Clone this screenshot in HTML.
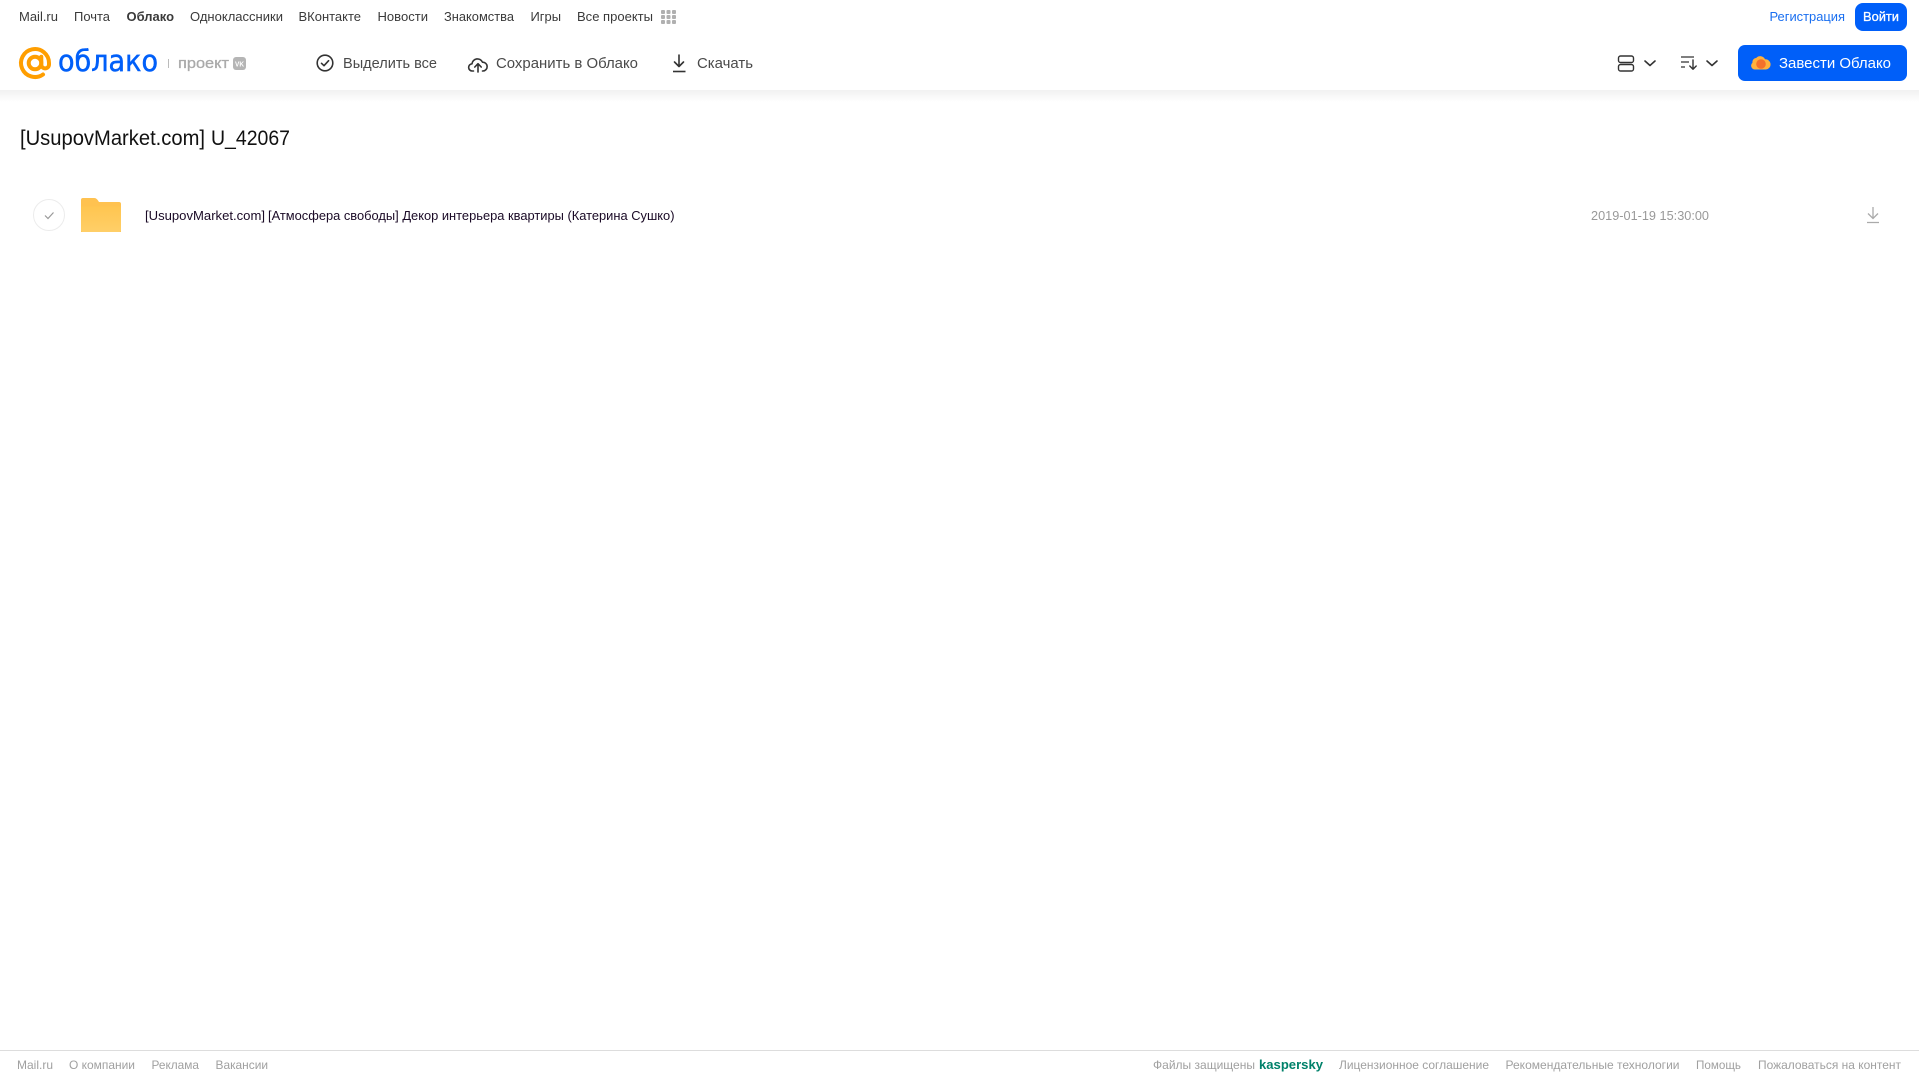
<!DOCTYPE html>
<html lang="ru">
<head>
<meta charset="utf-8">
<title>Облако</title>
<style>
html,body{margin:0;padding:0;background:#fff;width:1919px;height:1079px;overflow:hidden}
svg{display:block;position:absolute;left:0;top:0}
text{font-family:"Liberation Sans","DejaVu Sans",sans-serif;white-space:pre}
.n{font-size:13px;fill:#3a3a3a}
.t{font-size:15px;fill:#4a4a4a}
.f{font-size:12px;fill:#a0a0a0}
</style>
</head>
<body>
<svg width="1919" height="1079" viewBox="0 0 1919 1079" xmlns="http://www.w3.org/2000/svg">
<defs>
<linearGradient id="sh" x1="0" y1="0" x2="0" y2="1"><stop offset="0" stop-color="#f1f1f1"/><stop offset="1" stop-color="#fff"/></linearGradient>
<linearGradient id="fo" x1="0" y1="0" x2="0" y2="1"><stop offset="0" stop-color="#ffc550"/><stop offset="1" stop-color="#ffcf68"/></linearGradient>
</defs>
<rect x="0" y="90" width="1919" height="12" fill="url(#sh)"/>

<!-- top nav -->
<text class="n" x="19" y="21" textLength="39" lengthAdjust="spacingAndGlyphs">Mail.ru</text>
<text class="n" x="74" y="21" textLength="36" lengthAdjust="spacingAndGlyphs">Почта</text>
<text class="n" x="126.500" y="21" textLength="47.500" lengthAdjust="spacingAndGlyphs" font-weight="700">Облако</text>
<text class="n" x="190" y="21" textLength="93" lengthAdjust="spacingAndGlyphs">Одноклассники</text>
<text class="n" x="298.500" y="21" textLength="62.500" lengthAdjust="spacingAndGlyphs">ВКонтакте</text>
<text class="n" x="377.500" y="21" textLength="50.500" lengthAdjust="spacingAndGlyphs">Новости</text>
<text class="n" x="444" y="21" textLength="70" lengthAdjust="spacingAndGlyphs">Знакомства</text>
<text class="n" x="530.500" y="21" textLength="30.500" lengthAdjust="spacingAndGlyphs">Игры</text>
<text class="n" x="577" y="21" textLength="76" lengthAdjust="spacingAndGlyphs">Все проекты</text>
<g fill="#b0b0b0">
<rect x="661" y="10" width="4" height="4" rx="1"/><rect x="666.500" y="10" width="4" height="4" rx="1"/><rect x="672" y="10" width="4" height="4" rx="1"/>
<rect x="661" y="15" width="4" height="4" rx="1"/><rect x="666.500" y="15" width="4" height="4" rx="1"/><rect x="672" y="15" width="4" height="4" rx="1"/>
<rect x="661" y="20" width="4" height="4" rx="1"/><rect x="666.500" y="20" width="4" height="4" rx="1"/><rect x="672" y="20" width="4" height="4" rx="1"/>
</g>

<text x="1769.500" y="21" font-size="13" fill="#1a6ff0" textLength="75.500" lengthAdjust="spacingAndGlyphs">Регистрация</text>
<rect x="1855" y="3" width="52" height="28" rx="8" fill="#005ff9"/>
<text x="1863" y="21" font-size="13" fill="#fff" stroke="#fff" stroke-width=".3" textLength="36" lengthAdjust="spacingAndGlyphs">Войти</text>

<!-- logo -->
<g fill="none" stroke="#ff9e00" stroke-width="4" stroke-linecap="round">
<circle cx="35" cy="63" r="6.300"/>
<path d="M41.300 56.700v7.800a3.800 3.800 0 0 0 7.700 0V63a14 14 0 1 0-6 11.500"/>
</g>
<text x="58" y="71" font-size="29" fill="#005ff9" stroke="#005ff9" stroke-width=".5" textLength="100" lengthAdjust="spacingAndGlyphs" style="font-family:'DejaVu Sans',sans-serif">облако</text>
<rect x="168" y="59" width="1" height="9" fill="#bbb"/>
<text x="178" y="68" font-size="15" fill="#aaa" stroke="#aaa" stroke-width=".3" textLength="51" lengthAdjust="spacingAndGlyphs">проект</text>
<rect x="233" y="57" width="13" height="13" rx="3" fill="#b5b5b5"/>
<text x="235" y="66.500" font-size="7" font-weight="700" fill="#fff" textLength="9" lengthAdjust="spacingAndGlyphs">VK</text>

<!-- toolbar -->
<g fill="none" stroke="#333" stroke-width="1.600" stroke-linecap="round" stroke-linejoin="round">
<circle cx="325" cy="63" r="7.800"/>
<path d="M321.500 63.300l2.500 2.400 4.600-5"/>
<path d="M473.500 71h-1a3.600 3.600 0 0 1-.5-7.200 5.500 5.500 0 0 1 10.500-1.600A4.400 4.400 0 0 1 483 71h-.5"/>
<path d="M478 72v-8M474.800 67l3.200-3.300 3.200 3.300"/>
<path d="M679 55v11.500M674.500 62l4.500 4.500 4.500-4.500"/>
<path d="M673 71.500h12.500" stroke-linecap="butt"/>
<rect x="1618.500" y="56" width="15" height="6.500" rx="2" stroke-width="1.400"/>
<rect x="1618.500" y="64.500" width="15" height="6.500" rx="2" stroke-width="1.400"/>
<path d="M1645 61l5 4.500 5-4.500"/>
<path d="M1707 61l5 4.500 5-4.500"/>
<path d="M1681 57h13M1681 62h8M1681 67h4" stroke-width="1.300" stroke-linecap="butt"/>
<path d="M1693 60v9M1689.800 66l3.200 3.200 3.200-3.200" stroke-width="1.400"/>
</g>
<text class="t" x="343" y="68" textLength="94" lengthAdjust="spacingAndGlyphs">Выделить все</text>
<text class="t" x="496" y="68" textLength="142" lengthAdjust="spacingAndGlyphs">Сохранить в Облако</text>
<text class="t" x="697" y="68" textLength="56" lengthAdjust="spacingAndGlyphs">Скачать</text>

<!-- CTA -->
<rect x="1738" y="45" width="169" height="36" rx="7" fill="#005ff9"/>
<path d="M1755 69.500a3.800 3.800 0 0 1-2.600-6.600 4.300 4.300 0 0 1 3.900-5 5.200 5.200 0 0 1 8.700 1.400 5 5 0 0 1 1 10.200z" fill="#ffb13d"/>
<circle cx="1761" cy="64" r="4.800" fill="#f4702b"/>
<text x="1779" y="68" font-size="15" fill="#fff" textLength="112" lengthAdjust="spacingAndGlyphs">Завести Облако</text>

<!-- title -->
<text x="20" y="145" font-size="21" fill="#111" textLength="185" lengthAdjust="spacingAndGlyphs">[UsupovMarket.com]</text>
<text x="211" y="145" font-size="21" fill="#111" textLength="79" lengthAdjust="spacingAndGlyphs">U_42067</text>

<!-- row -->
<circle cx="49" cy="215" r="15.500" fill="#fff" stroke="#ececec"/>
<path d="M45 215.500l3 3 5.500-6" fill="none" stroke="#999" stroke-width="1.200"/>
<path d="M81 200a2 2 0 0 1 2-2h11c2 0 3 1 4 2.500l1 1.500h20a2 2 0 0 1 2 2v28H81z" fill="#ffc250"/>
<path d="M81 206.500h40V230a2 2 0 0 1-2 2H83a2 2 0 0 1-2-2z" fill="url(#fo)"/>
<text x="145" y="220" font-size="13" fill="#1a0a26" textLength="120" lengthAdjust="spacingAndGlyphs">[UsupovMarket.com]</text>
<text x="268" y="220" font-size="13" fill="#1a0a26" textLength="406.500" lengthAdjust="spacingAndGlyphs">[Атмосфера свободы] Декор интерьера квартиры (Катерина Сушко)</text>
<text x="1591" y="220" font-size="12.500" fill="#999" textLength="118" lengthAdjust="spacingAndGlyphs">2019-01-19 15:30:00</text>
<path d="M1873 207v11.500M1868 213.500l5 5 5-5M1867 222.500h12" fill="none" stroke="#aaa" stroke-width="1.300"/>

<!-- footer -->
<rect x="0" y="1050" width="1919" height="1" fill="#ddd"/>
<text class="f" x="17" y="1069" textLength="36" lengthAdjust="spacingAndGlyphs">Mail.ru</text>
<text class="f" x="69" y="1069" textLength="66" lengthAdjust="spacingAndGlyphs">О компании</text>
<text class="f" x="151.500" y="1069" textLength="47.500" lengthAdjust="spacingAndGlyphs">Реклама</text>
<text class="f" x="215.500" y="1069" textLength="52.500" lengthAdjust="spacingAndGlyphs">Вакансии</text>
<text class="f" x="1153" y="1069" textLength="102" lengthAdjust="spacingAndGlyphs">Файлы защищены</text>
<text x="1259" y="1069" font-size="13" font-weight="700" fill="#00816a" textLength="64" lengthAdjust="spacingAndGlyphs">kaspersky</text>
<text class="f" x="1339" y="1069" textLength="150" lengthAdjust="spacingAndGlyphs">Лицензионное соглашение</text>
<text class="f" x="1505.500" y="1069" textLength="174" lengthAdjust="spacingAndGlyphs">Рекомендательные технологии</text>
<text class="f" x="1696" y="1069" textLength="45" lengthAdjust="spacingAndGlyphs">Помощь</text>
<text class="f" x="1758" y="1069" textLength="143" lengthAdjust="spacingAndGlyphs">Пожаловаться на контент</text>
</svg>
</body>
</html>
